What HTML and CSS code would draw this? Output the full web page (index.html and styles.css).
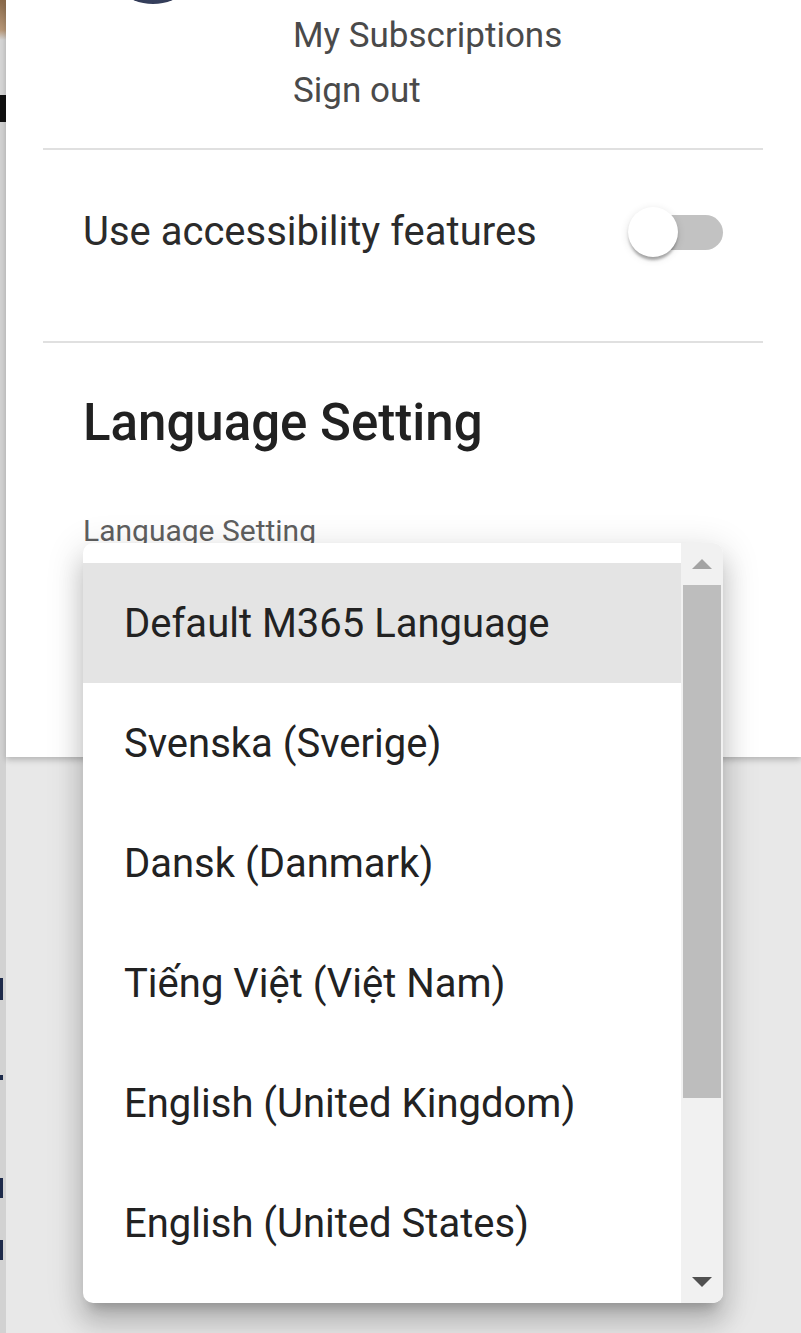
FILE: index.html
```html
<!DOCTYPE html>
<html lang="en">
<head>
<meta charset="utf-8">
<title>Settings</title>
<link rel="stylesheet" href="styles.css">
</head>
<body>
<div class="page-strip"></div>
<div class="main">
  <aside class="panel">
    <div class="profile">
      <div class="avatar-row"><div class="avatar"></div></div>
      <nav class="links">
        <a class="link">My Subscriptions</a>
        <a class="link">Sign out</a>
      </nav>
    </div>
    <div class="divider"></div>
    <div class="a11y-row">
      <span class="a11y-label">Use accessibility features</span>
      <div class="toggle">
        <div class="toggle-track"></div>
        <div class="toggle-thumb"></div>
      </div>
    </div>
    <div class="divider"></div>
    <section class="lang">
      <h2 class="lang-title">Language Setting</h2>
      <div class="field">
        <label class="field-label">Language Setting</label>
        <div class="field-value">Default M365 Language</div>
      </div>
    </section>
  </aside>

  <div class="dropdown" role="listbox">
    <ul class="options">
      <li class="option active">Default M365 Language</li>
      <li class="option">Svenska (Sverige)</li>
      <li class="option">Dansk (Danmark)</li>
      <li class="option">Tiếng Việt (Việt Nam)</li>
      <li class="option">English (United Kingdom)</li>
      <li class="option">English (United States)</li>
    </ul>
    <div class="scrollbar">
      <div class="sb-btn"><span class="arrow-up"></span></div>
      <div class="sb-track">
        <div class="sb-thumb"></div>
      </div>
      <div class="sb-btn"><span class="arrow-down"></span></div>
    </div>
  </div>
</div>
</body>
</html>
```
FILE: styles.css
```css
* { box-sizing: border-box; }

html, body {
  margin: 0;
  height: 1333px;
  overflow: hidden;
}

body {
  display: flex;
  background: #e8e8e8;
  font-family: Roboto, "Noto Sans", "Liberation Sans", sans-serif;
  color: #212121;
}

.page-strip {
  width: 6px;
  flex: none;
  background:
    linear-gradient(to bottom,
      transparent 0, transparent 978px,
      #1d2a4a 978px, #1d2a4a 1000px,
      transparent 1000px, transparent 1075px,
      #1d2a4a 1075px, #1d2a4a 1080px,
      transparent 1080px, transparent 1178px,
      #1d2a4a 1178px, #1d2a4a 1198px,
      transparent 1198px, transparent 1240px,
      #1d2a4a 1240px, #1d2a4a 1260px,
      transparent 1260px) left / 3px 100% no-repeat,
    linear-gradient(to bottom,
      #8a6a4a 0, #b89878 30px,
      #d6d6d6 40px, #d6d6d6 95px,
      #111 95px, #111 122px,
      #d2d2d2 122px, #d2d2d2 100%);
}

.main {
  flex: 1;
  position: relative;
  display: flex;
  flex-direction: column;
}

.panel {
  height: 757px;
  background: #fff;
  overflow: hidden;
  box-shadow: 0 3px 6px rgba(0, 0, 0, 0.22);
  display: flex;
  flex-direction: column;
}

/* profile (scrolled partly off the top) */
.profile {
  display: flex;
  flex-direction: column;
}

.avatar-row {
  margin-top: -96px;
  padding-left: 97px;
}

.avatar {
  width: 100px;
  height: 100px;
  border-radius: 50%;
  background: radial-gradient(circle at 50% 85%, #3b4666 0, #2a3148 40%, #5a5f70 80%);
}

.links {
  display: flex;
  flex-direction: column;
  padding-left: 287px;
  padding-top: 4px;
}

.link {
  font-size: 35px;
  line-height: 55px;
  color: #4a4a4a;
}

.divider {
  height: 2px;
  background: #e0e0e0;
  margin: 0 38px 0 37px;
  flex: none;
}

.profile + .divider { margin-top: 30px; }

.a11y-row {
  display: flex;
  align-items: center;
  justify-content: space-between;
  padding: 52px 78px 79px 77px;
}

.a11y-label {
  font-size: 40px;
  line-height: 60px;
  color: #2b2b2b;
}

.toggle {
  position: relative;
  width: 90px;
  height: 50px;
  display: flex;
  align-items: center;
}

.toggle-track {
  width: 90px;
  height: 35px;
  border-radius: 18px;
  background: #c2c2c2;
}

.toggle-thumb {
  position: absolute;
  left: -5px;
  top: 0;
  width: 50px;
  height: 50px;
  border-radius: 50%;
  background: #fff;
  box-shadow: 0 5px 3px -2px rgba(0,0,0,.2), 0 3px 3px 0 rgba(0,0,0,.14), 0 2px 8px 0 rgba(0,0,0,.12);
}

.lang {
  padding: 50px 40px 0 77px;
}

.lang-title {
  margin: 0;
  font-size: 51px;
  line-height: 60px;
  font-weight: 500;
  color: #212121;
}

.field {
  margin-top: 60px;
  display: flex;
  flex-direction: column;
}

.field-label {
  font-size: 30px;
  line-height: 36px;
  color: #5f5f5f;
}

.field-value {
  font-size: 40px;
  line-height: 56px;
  color: #212121;
}

/* dropdown overlay */
.dropdown {
  position: absolute;
  left: 77px;
  top: 543px;
  width: 640px;
  height: 760px;
  background: #fff;
  border-radius: 10px;
  overflow: hidden;
  display: flex;
  box-shadow:
    0 12px 12px -8px rgba(0,0,0,.2),
    0 20px 25px 2px rgba(0,0,0,.14),
    0 8px 35px 5px rgba(0,0,0,.12);
}

.options {
  list-style: none;
  margin: 0;
  padding: 20px 0 0;
  flex: 1;
  overflow: hidden;
}

.option {
  height: 120px;
  display: flex;
  align-items: center;
  padding-left: 41px;
  font-size: 40px;
  color: #222;
  white-space: nowrap;
}

.option.active { background: #e4e4e4; }

.scrollbar {
  width: 42px;
  flex: none;
  background: #f1f1f1;
  display: flex;
  flex-direction: column;
}

.sb-btn {
  height: 42px;
  flex: none;
  display: flex;
  align-items: center;
  justify-content: center;
}

.arrow-up {
  width: 0;
  height: 0;
  border-left: 10px solid transparent;
  border-right: 10px solid transparent;
  border-bottom: 10px solid #a3a3a3;
}

.arrow-down {
  width: 0;
  height: 0;
  border-left: 10px solid transparent;
  border-right: 10px solid transparent;
  border-top: 10px solid #505050;
}

.sb-track {
  flex: 1;
  padding: 0 2px;
}

.sb-thumb {
  height: 513px;
  background: #bdbdbd;
}
```
